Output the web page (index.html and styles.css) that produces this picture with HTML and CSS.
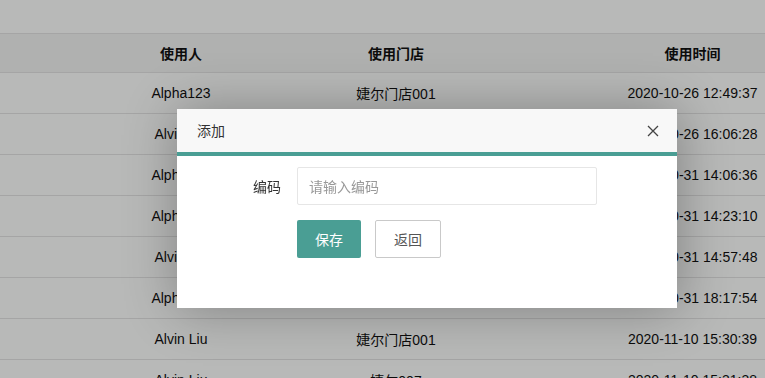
FILE: index.html
```html
<!DOCTYPE html>
<html lang="zh-CN">
<head>
    <meta charset="UTF-8">
    <title>使用记录</title>
    <link rel="stylesheet" href="styles.css">
</head>
<body>
    <div class="toolbar"></div>
    <div class="table">
        <div class="row head">
            <div class="cell"></div>
            <div class="cell">使用人</div>
            <div class="cell">使用门店</div>
            <div class="cell"></div>
            <div class="cell">使用时间</div>
        </div>
        <div class="row">
            <div class="cell"></div>
            <div class="cell">Alpha123</div>
            <div class="cell">婕尔门店001</div>
            <div class="cell"></div>
            <div class="cell">2020-10-26 12:49:37</div>
        </div>
        <div class="row">
            <div class="cell"></div>
            <div class="cell">Alvin Liu</div>
            <div class="cell">婕尔门店001</div>
            <div class="cell"></div>
            <div class="cell">2020-10-26 16:06:28</div>
        </div>
        <div class="row">
            <div class="cell"></div>
            <div class="cell">Alpha123</div>
            <div class="cell">婕尔门店001</div>
            <div class="cell"></div>
            <div class="cell">2020-10-31 14:06:36</div>
        </div>
        <div class="row">
            <div class="cell"></div>
            <div class="cell">Alpha123</div>
            <div class="cell">婕尔门店001</div>
            <div class="cell"></div>
            <div class="cell">2020-10-31 14:23:10</div>
        </div>
        <div class="row">
            <div class="cell"></div>
            <div class="cell">Alvin Liu</div>
            <div class="cell">婕尔门店001</div>
            <div class="cell"></div>
            <div class="cell">2020-10-31 14:57:48</div>
        </div>
        <div class="row">
            <div class="cell"></div>
            <div class="cell">Alpha123</div>
            <div class="cell">婕尔门店001</div>
            <div class="cell"></div>
            <div class="cell">2020-10-31 18:17:54</div>
        </div>
        <div class="row">
            <div class="cell"></div>
            <div class="cell">Alvin Liu</div>
            <div class="cell">婕尔门店001</div>
            <div class="cell"></div>
            <div class="cell">2020-11-10 15:30:39</div>
        </div>
        <div class="row">
            <div class="cell"></div>
            <div class="cell">Alvin Liu</div>
            <div class="cell">婕尔007</div>
            <div class="cell"></div>
            <div class="cell">2020-11-10 15:31:38</div>
        </div>
    </div>

    <div class="shade"></div>

    <div class="layer">
        <div class="layer-title">
            添加
            <span class="layer-close">
                <svg width="12" height="12" viewBox="0 0 12 12">
                    <path d="M1 1L11 11M11 1L1 11" stroke="#444" stroke-width="1.3" fill="none"/>
                </svg>
            </span>
        </div>
        <div class="layer-body">
            <div class="form-item">
                <label class="form-label" for="code">编码</label>
                <input class="form-input" type="text" id="code" placeholder="请输入编码">
            </div>
            <div class="form-buttons">
                <button class="btn btn-primary">保存</button>
                <button class="btn btn-plain">返回</button>
            </div>
        </div>
    </div>
</body>
</html>
```

FILE: styles.css
```css
html, body {
    margin: 0;
    padding: 0;
    overflow: hidden;
}
body {
    font-family: "Liberation Sans", "Noto Sans CJK SC", sans-serif;
    font-size: 14px;
    color: #111;
    background-color: #fdfefd;
}
.toolbar {
    height: 33px;
}
.table {
    border-top: 1px solid #e2e3e2;
}
.row {
    display: grid;
    grid-template-columns: 72px 218px 212px 118px 145px;
    height: 40px;
    border-bottom: 1px solid #e2e3e2;
}
.row.head {
    height: 38px;
    background-color: #f2f3f2;
    font-weight: bold;
}
.cell {
    display: flex;
    align-items: center;
    justify-content: center;
    white-space: nowrap;
}
.shade {
    position: fixed;
    inset: 0;
    background-color: rgba(0, 0, 0, 0.27);
}
.layer {
    position: fixed;
    left: 177px;
    top: 109px;
    width: 500px;
    height: 199px;
    background-color: #fff;
    box-shadow: 1px 1px 50px rgba(0, 0, 0, 0.3);
    font-family: "Noto Sans CJK SC", "Liberation Sans", sans-serif;
}
.layer-title {
    position: relative;
    height: 43px;
    line-height: 43px;
    padding: 0 80px 0 20px;
    background-color: #f8f8f8;
    border-bottom: 4px solid #4a9e94;
    color: #333;
    font-size: 14px;
}
.layer-close {
    position: absolute;
    right: 18px;
    top: 16px;
    width: 12px;
    height: 12px;
    display: flex;
}
.layer-body {
    padding-top: 11px;
}
.form-item {
    display: flex;
    align-items: center;
}
.form-label {
    width: 104px;
    margin-right: 16px;
    text-align: right;
    color: #333;
    font-size: 14px;
}
.form-input {
    width: 300px;
    height: 38px;
    box-sizing: border-box;
    padding: 0 11px;
    border: 1px solid #e6e6e6;
    border-radius: 2px;
    font-family: inherit;
    font-size: 14px;
    outline: none;
}
.form-input::placeholder {
    color: #999;
}
.form-buttons {
    display: flex;
    gap: 14px;
    margin: 15px 0 0 120px;
}
.btn {
    height: 38px;
    box-sizing: border-box;
    border-radius: 2px;
    font-family: inherit;
    font-size: 14px;
    cursor: pointer;
}
.btn-primary {
    width: 64px;
    background-color: #4a9e94;
    color: #fff;
    border: none;
}
.btn-plain {
    width: 66px;
    background-color: #fff;
    color: #555;
    border: 1px solid #c9c9c9;
}
```
